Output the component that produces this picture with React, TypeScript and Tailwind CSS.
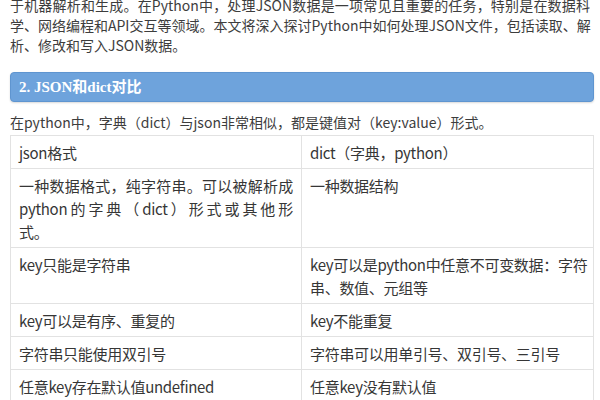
const intro = [
  "于机器解析和生成。在Python中，处理JSON数据是一项常见且重要的任务，特别是在数据科",
  "学、网络编程和API交互等领域。本文将深入探讨Python中如何处理JSON文件，包括读取、解",
  "析、修改和写入JSON数据。",
];

type Cell = { lines: string[]; justify?: boolean };

const rows: [Cell, Cell][] = [
  [{ lines: ["json格式"] }, { lines: ["dict（字典，python）"] }],
  [
    {
      lines: ["一种数据格式，纯字符串。可以被解析成", "python的字典（dict）形式或其他形", "式。"],
      justify: true,
    },
    { lines: ["一种数据结构"] },
  ],
  [
    { lines: ["key只能是字符串"] },
    { lines: ["key可以是python中任意不可变数据：字符", "串、数值、元组等"], justify: true },
  ],
  [{ lines: ["key可以是有序、重复的"] }, { lines: ["key不能重复"] }],
  [{ lines: ["字符串只能使用双引号"] }, { lines: ["字符串可以用单引号、双引号、三引号"] }],
  [{ lines: ["任意key存在默认值undefined"] }, { lines: ["任意key没有默认值"] }],
];

function TableCell({ cell, last }: { cell: Cell; last?: boolean }) {
  return (
    <div className={`px-2 pt-[5px] pb-[4px] ${last ? "" : "border-r border-[#e2e2e2]"}`}>
      {cell.lines.map((line, i) => {
        const stretch = cell.justify && i < cell.lines.length - 1;
        return (
          <div
            key={i}
            className={`h-[23px] leading-[23px] whitespace-nowrap ${
              stretch ? "text-justify [text-align-last:justify]" : ""
            }`}
          >
            {line}
          </div>
        );
      })}
    </div>
  );
}

export default function App() {
  return (
    <div className="h-[400px] w-[600px] overflow-hidden bg-white font-['Noto_Sans_CJK_SC','Noto_Sans',sans-serif] text-[#3d3d3d]">
      <div className="-mt-[5px] pl-[10px] pr-[10px] text-[14px] leading-[20px]">
        {intro.map((line, i) => (
          <div
            key={i}
            className={`whitespace-nowrap ${
              i < intro.length - 1 ? "text-justify [text-align-last:justify]" : ""
            }`}
          >
            {line}
          </div>
        ))}
      </div>

      <div className="ml-[10px] mr-[6px] mt-[17px] flex h-[30px] items-center rounded-[4px] border border-[#5f95d0] bg-[#6ea3dc] pl-[8px] shadow-[0_1px_2px_rgba(0,0,0,0.15)]">
        <span className="font-['Liberation_Serif','Noto_Sans_CJK_SC',serif] text-[15px] font-bold text-white">
          2. JSON和dict对比
        </span>
      </div>

      <div className="mt-[10px] pl-[10px] text-[14px] leading-[20px]">
        在python中，字典（dict）与json非常相似，都是键值对（key:value）形式。
      </div>

      <div className="ml-[10px] mr-[6px] mt-[3px] border border-[#e2e2e2] text-[15px] tracking-[-0.3px] text-[#363636]">
        {rows.map(([left, right], i) => (
          <div
            key={i}
            className={`grid grid-cols-[291px_1fr] ${i > 0 ? "border-t border-[#e2e2e2]" : ""}`}
          >
            <TableCell cell={left} />
            <TableCell cell={right} last />
          </div>
        ))}
      </div>
    </div>
  );
}
